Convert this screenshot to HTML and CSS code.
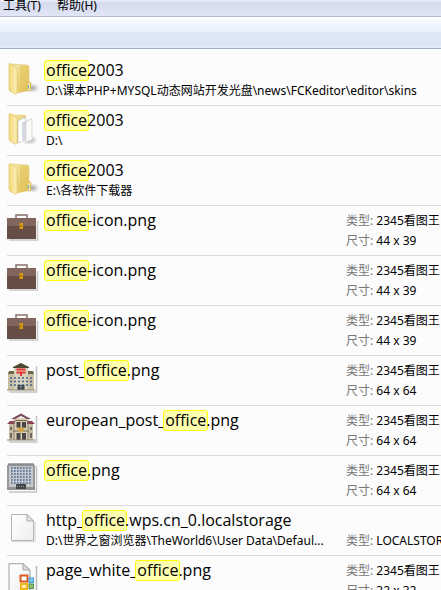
FILE: index.html
```html
<!DOCTYPE html>
<html lang="zh-CN">
<head>
    <meta charset="UTF-8">
    <meta name="viewport" content="width=device-width, initial-scale=1.0">
    <title>office</title>
    <link rel="stylesheet" href="styles.css">
</head>
<body>
    <!-- shared icons -->
    <svg class="sprite" aria-hidden="true">
        <defs>
            <linearGradient id="gold" x1="0" y1="0" x2="1" y2="1">
                <stop offset="0" stop-color="#f9ecae"/>
                <stop offset="1" stop-color="#dcb94c"/>
            </linearGradient>
            <linearGradient id="goldFront" x1="0" y1="0" x2="1" y2="0">
                <stop offset="0" stop-color="#f2d878"/>
                <stop offset="1" stop-color="#fbf0b8"/>
            </linearGradient>
            <linearGradient id="paper" x1="0" y1="0" x2="1" y2="1">
                <stop offset="0" stop-color="#ffffff"/>
                <stop offset="1" stop-color="#eeeeee"/>
            </linearGradient>
            <radialGradient id="shade">
                <stop offset="0" stop-color="#777" stop-opacity=".7"/>
                <stop offset="1" stop-color="#999" stop-opacity="0"/>
            </radialGradient>
        </defs>
        <symbol id="folder" viewBox="0 0 32 34">
            <ellipse cx="25" cy="25" rx="8" ry="5" fill="url(#shade)"/>
            <path d="M3 1 20 2Q22 2 22 4V18L24 20V27L10 30 3 28Z" fill="url(#gold)" stroke="#dfc576" stroke-width=".6"/>
            <path d="M13 3 21 3V26L13 28Z" fill="#e5c65f" opacity=".6"/>
            <path d="M2 1Q3 0 4 1L10 5V30Q9 32 8 31L3 28Q2 27 2 26Z" fill="url(#goldFront)" stroke="#e1c470" stroke-width=".7"/>
            <rect x="20.500" y="19.500" width="3" height="8" rx="1" fill="#f9e9a2" stroke="#d4b24e" stroke-width=".7"/>
            <path d="M21.500 22v4" stroke="#72b3d7"/>
        </symbol>
        <symbol id="folder-full" viewBox="0 0 32 34">
            <ellipse cx="22" cy="27" rx="9" ry="5" fill="url(#shade)"/>
            <path d="M3 1 19 2V27L10 30 3 28Z" fill="url(#gold)"/>
            <path d="M11 8 18 4V27L11 30Z" fill="#fff" stroke="#bbb" stroke-width=".7"/>
            <path d="M14 10 21 5V27L15 30Z" fill="#d5dae2" stroke="#fff"/>
            <path d="M19 8 25 6V27L19 29Z" fill="#fafafa" stroke="#ccc" stroke-width=".7"/>
            <path d="M2 1Q3 0 4 1L10 5V30Q9 32 8 31L3 28Q2 27 2 26Z" fill="url(#goldFront)" stroke="#e1c470" stroke-width=".7"/>
        </symbol>
        <symbol id="briefcase" viewBox="0 0 32 34">
            <path d="M2 27H30.500V8" fill="none" stroke="#c8c8c8" stroke-width="1.500"/>
            <path d="M9 6V2H20V6" fill="none" stroke="#86706b" stroke-width="1.500"/>
            <path d="M0 5H29V14H0Z" fill="#82665e"/>
            <path d="M0 13H29V26H0Z" fill="#664d46"/>
            <path d="M12.500 10h3.500v6h-3.500Z" fill="#d89b0a"/>
            <path d="M14 12v2" stroke="#8b650c"/>
        </symbol>
        <symbol id="post-office" viewBox="0 0 32 34">
            <path d="M2 29H29.500V3" fill="none" stroke="#c4c4c4" stroke-width="1.500"/>
            <path d="M1 10 3 8H25L27 10V27H1Z" fill="#c8bea4"/>
            <path d="M1 11 2 8H9V11ZM19 8H26L27 11H19Z" fill="#6d674c"/>
            <path d="M7 4 10 2 14 0 18 2 21 4V27H7Z" fill="#d8d1bb"/>
            <path d="M6 4 10 2 14 0 18 2 22 4V5H6Z" fill="#4f4a35"/>
            <path d="M9.500 6.500h9M9.500 9.500h9M14 9v4" stroke="#e53232" stroke-width="2"/>
            <path d="M3 15h22M3 18.500h22M3 22h22" stroke="#42618c" stroke-width="1.500" stroke-dasharray="2 2"/>
            <path d="M10.500 22h7v5h-7Z" fill="#3d4551"/>
            <path d="M12 23.500h4M14 23v4" stroke="#81909c" stroke-width=".8"/>
            <path d="M0 27h28" stroke="#91866e"/>
        </symbol>
        <symbol id="euro-post" viewBox="0 0 32 34">
            <path d="M2 29H29.500V3" fill="none" stroke="#c4c4c4" stroke-width="1.500"/>
            <path d="M2 10H26V27H2Z" fill="#c6bda6"/>
            <path d="M6 5H22V27H6Z" fill="#d8cfb8"/>
            <path d="M4 6 14 .5 24 6H20L14 3 8 6Z" fill="#794956"/>
            <path d="M0 11 3 8H8V11ZM20 8H25L28 11H20Z" fill="#8d4057"/>
            <path d="M8 7.500h12M6 18h16" stroke="#776252"/>
            <path d="M9.500 9h4v6h-4ZM15 9h4v6h-4ZM9.500 20h4v7h-4ZM15 20h4v7h-4Z" fill="#4b4744"/>
            <path d="M3 14h2v3H3ZM23 14h2v3h-2ZM3 20h2v5H3ZM23 20h2v5h-2Z" fill="#746960"/>
            <path d="M7 8v19M21 8v19" stroke="#887969"/>
            <path d="m10 14 4 1 4-1-1 4-3 2-3-2Z" fill="#d0a64d"/>
            <path d="M0 27h28" stroke="#91866e"/>
        </symbol>
        <symbol id="office" viewBox="0 0 32 34">
            <path d="M2 29H29.500V3" fill="none" stroke="#c4c4c4" stroke-width="1.500"/>
            <path d="M2 0H26V27H2Z" fill="#c6c7c9"/>
            <path d="M1 .5H27V3H1Z" fill="#8d8e92"/>
            <path d="M1 2V26M27 2V26" stroke="#98999d" stroke-width="2"/>
            <path d="M4 5h21M4 8h21M4 11h21M4 14h21M4 17h21M4 20h21" stroke="#4a6a9a" stroke-width="1.700" stroke-dasharray="1.700 1.300"/>
            <path d="M0 24h28v3H0Z" fill="#919194"/>
            <path d="M9 21h10v5H9Z" fill="#444648"/>
            <path d="M10 23.500h8" stroke="#999" stroke-dasharray="1 1"/>
        </symbol>
        <symbol id="file" viewBox="0 0 32 34">
            <path d="M5 28.500H28V9" fill="none" stroke="#ddd" stroke-width="1.500"/>
            <path d="M4.500 1.500H20L26.500 8V27.500H4.500Z" fill="url(#paper)" stroke="#b5b5b5"/>
            <path d="M20 1.500V8H26.500Z" fill="#e7e7e7" stroke="#aaa"/>
        </symbol>
        <symbol id="page-office" viewBox="0 0 32 34">
            <path d="M2 30.500H29.500V3" fill="none" stroke="#bbb" stroke-width="1.500"/>
            <path d="M2 .7H16L23 7V28H2Z" fill="url(#paper)" stroke="#a0a0a0"/>
            <path d="M16 .7V7H23Z" fill="#ddd" stroke="#999" stroke-width=".8"/>
            <rect x="13.500" y="12.500" width="7" height="6" fill="#fff" stroke="#dc5922" stroke-width="2"/>
            <rect x="22" y="15" width="4.500" height="4.500" fill="#7cc7ef" stroke="#3e9ddb"/>
            <rect x="14" y="21" width="6" height="5" fill="#fff0ad" stroke="#f0b51d" stroke-width="2"/>
            <rect x="22" y="21" width="4.500" height="4.500" fill="#91ba70" stroke="#54974b"/>
        </symbol>
    </svg>

    <nav class="menubar">
        <button class="menu" type="button">工具(T)</button>
        <button class="menu" type="button">帮助(H)</button>
    </nav>
    <div class="toolbar"></div>

    <ul class="results">
        <li class="item">
            <svg class="icon"><use href="#folder"/></svg>
            <div class="info">
                <div class="name"><mark>office</mark>2003</div>
                <div class="path">D:\课本PHP+MYSQL动态网站开发光盘\news\FCKeditor\editor\skins</div>
            </div>
        </li>
        <li class="item">
            <svg class="icon"><use href="#folder-full"/></svg>
            <div class="info">
                <div class="name"><mark>office</mark>2003</div>
                <div class="path">D:\</div>
            </div>
        </li>
        <li class="item">
            <svg class="icon"><use href="#folder"/></svg>
            <div class="info">
                <div class="name"><mark>office</mark>2003</div>
                <div class="path">E:\各软件下载器</div>
            </div>
        </li>
        <li class="item">
            <svg class="icon"><use href="#briefcase"/></svg>
            <div class="info">
                <div class="name"><mark>office</mark>-icon.png</div>
            </div>
            <div class="meta">
                <div><span>类型:</span> 2345看图王</div>
                <div><span>尺寸:</span> 44 x 39</div>
            </div>
        </li>
        <li class="item">
            <svg class="icon"><use href="#briefcase"/></svg>
            <div class="info">
                <div class="name"><mark>office</mark>-icon.png</div>
            </div>
            <div class="meta">
                <div><span>类型:</span> 2345看图王</div>
                <div><span>尺寸:</span> 44 x 39</div>
            </div>
        </li>
        <li class="item">
            <svg class="icon"><use href="#briefcase"/></svg>
            <div class="info">
                <div class="name"><mark>office</mark>-icon.png</div>
            </div>
            <div class="meta">
                <div><span>类型:</span> 2345看图王</div>
                <div><span>尺寸:</span> 44 x 39</div>
            </div>
        </li>
        <li class="item">
            <svg class="icon"><use href="#post-office"/></svg>
            <div class="info">
                <div class="name">post_<mark>office</mark>.png</div>
            </div>
            <div class="meta">
                <div><span>类型:</span> 2345看图王</div>
                <div><span>尺寸:</span> 64 x 64</div>
            </div>
        </li>
        <li class="item">
            <svg class="icon"><use href="#euro-post"/></svg>
            <div class="info">
                <div class="name">european_post_<mark>office</mark>.png</div>
            </div>
            <div class="meta">
                <div><span>类型:</span> 2345看图王</div>
                <div><span>尺寸:</span> 64 x 64</div>
            </div>
        </li>
        <li class="item">
            <svg class="icon"><use href="#office"/></svg>
            <div class="info">
                <div class="name"><mark>office</mark>.png</div>
            </div>
            <div class="meta">
                <div><span>类型:</span> 2345看图王</div>
                <div><span>尺寸:</span> 64 x 64</div>
            </div>
        </li>
        <li class="item">
            <svg class="icon"><use href="#file"/></svg>
            <div class="info">
                <div class="name">http_<mark>office</mark>.wps.cn_0.localstorage</div>
                <div class="path">D:\世界之窗浏览器\TheWorld6\User Data\Defaul...</div>
            </div>
            <div class="meta bottom">
                <div><span>类型:</span> LOCALSTORAGE</div>
            </div>
        </li>
        <li class="item">
            <svg class="icon"><use href="#page-office"/></svg>
            <div class="info">
                <div class="name">page_white_<mark>office</mark>.png</div>
            </div>
            <div class="meta">
                <div><span>类型:</span> 2345看图王</div>
                <div><span>尺寸:</span> 32 x 32</div>
            </div>
        </li>
    </ul>
</body>
</html>
```
FILE: styles.css
```css
* {
    box-sizing: border-box;
}

body {
    margin: 0;
    height: 100vh;
    overflow: hidden;
    background-color: #fcfcfc;
    color: #000;
    font-family: "Noto Sans", "Noto Sans CJK SC", sans-serif;
    font-size: 12px;
}

.sprite {
    position: absolute;
    width: 0;
    height: 0;
}

.menubar {
    display: flex;
    align-items: flex-start;
    gap: 16px;
    height: 17px;
    padding: 0 3px;
    background: linear-gradient(#e6eaf6 0 2px, #d4daed 2px, #e1e6f6);
    border-bottom: 1px solid #b2bace;
}

.menu {
    padding: 0;
    border: none;
    background: none;
    color: #000;
    font: inherit;
    line-height: 12px;
}

.toolbar {
    height: 32px;
    background: linear-gradient(#fbfdff, #e7f1fb 15px, #dce6f4 15px, #dce6f4 29px, #e4eefb);
    border-bottom: 1px solid #a0afc3;
}

.results {
    margin: 0;
    padding: 6px 0 0 7px;
    list-style: none;
}

.item {
    display: flex;
    height: 50px;
    padding-top: 4px;
    border-top: 1px solid #dadada;
    line-height: 20px;
    white-space: nowrap;
}

.item:first-child {
    border-top-color: transparent;
}

.icon {
    flex: none;
    width: 32px;
    height: 34px;
    margin: 3px 7px 0 0;
}

.info {
    flex: 1;
    min-width: 0;
}

.name {
    font-family: "Open Sans", "Noto Sans CJK SC", sans-serif;
    font-size: 16px;
    line-height: 21px;
}

.name mark {
    display: inline-block;
    margin: 0 -2px;
    padding: 0 1px;
    border: 1px solid #ffff00;
    border-radius: 3px;
    background-color: #ffffb0;
    color: inherit;
    line-height: 19px;
}

.meta {
    flex: none;
    width: 95px;
    padding-top: 1px;
    overflow: hidden;
}

.meta span {
    color: #777;
}

.bottom {
    align-self: flex-start;
    padding-top: 21px;
}
```
